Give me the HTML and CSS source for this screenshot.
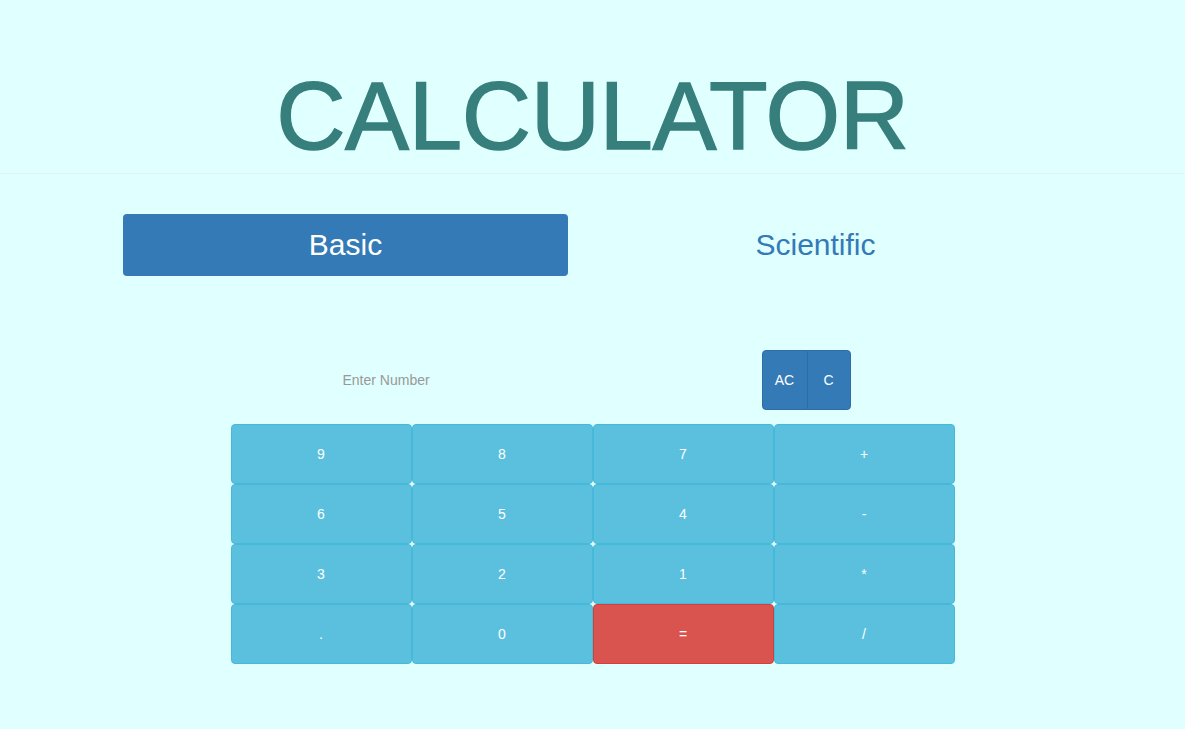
FILE: index.html
```html
<!DOCTYPE html>
<html>
<head>
<meta charset="utf-8">
<title>Calculator</title>
<link rel="stylesheet" href="styles.css">
</head>
<body>
<header class="page-header">
  <h1 class="title">CALCULATOR</h1>
</header>
<nav class="tabs">
  <a class="tab tab-active">Basic</a>
  <a class="tab tab-plain">Scientific</a>
</nav>
<main class="calc">
  <div class="entry-row">
    <input class="entry" type="text" placeholder="Enter Number">
    <div class="clear-group">
      <button class="clear-btn clear-all">AC</button>
      <button class="clear-btn clear-one">C</button>
    </div>
  </div>
  <div class="keys">
    <button class="key">9</button>
    <button class="key">8</button>
    <button class="key">7</button>
    <button class="key">+</button>
    <button class="key">6</button>
    <button class="key">5</button>
    <button class="key">4</button>
    <button class="key">-</button>
    <button class="key">3</button>
    <button class="key">2</button>
    <button class="key">1</button>
    <button class="key">*</button>
    <button class="key">.</button>
    <button class="key">0</button>
    <button class="key key-equals">=</button>
    <button class="key">/</button>
  </div>
</main>
</body>
</html>
```
FILE: styles.css
```css
html, body {
  margin: 0;
  padding: 0;
  background: #e0ffff;
  font-family: "Liberation Sans", Arial, Helvetica, sans-serif;
  font-size: 14px;
}

.page-header {
  padding: 68px 0 9px;
  border-bottom: 1px solid #e6f0f0;
}

.title {
  margin: 0;
  text-align: center;
  font-size: 96px;
  line-height: 96px;
  font-weight: normal;
  letter-spacing: -0.4px;
  color: #367f7c;
  -webkit-text-stroke: 1.4px #367f7c;
}

.tabs {
  display: flex;
  margin: 40px 122px 0 123px;
}

.tab {
  display: flex;
  align-items: center;
  justify-content: center;
  height: 62px;
  font-size: 30px;
  border-radius: 4px;
  cursor: pointer;
}

.tab-active {
  width: 445px;
  background: #337ab7;
  color: #fff;
}

.tab-plain {
  flex: 1;
  color: #337ab7;
}

.calc {
  width: 724px;
  margin: 74px auto 0;
}

.entry-row {
  display: flex;
  align-items: center;
  height: 60px;
  margin-bottom: 14px;
}

.entry {
  box-sizing: border-box;
  width: 431px;
  margin-left: 100px;
  padding: 0 12px;
  height: 34px;
  border: none;
  background: transparent;
  font-family: inherit;
  font-size: 14px;
  color: #555;
  outline: none;
}

.entry::placeholder {
  color: #999;
}

.clear-group {
  display: flex;
  height: 60px;
}

.clear-btn {
  height: 60px;
  padding: 0;
  background: #337ab7;
  border: 1px solid #2e6da4;
  color: #fff;
  font-family: inherit;
  font-size: 14px;
  text-align: center;
}

.clear-all {
  width: 46px;
  border-radius: 4px 0 0 4px;
}

.clear-one {
  width: 44px;
  margin-left: -1px;
  border-radius: 0 4px 4px 0;
}

.keys {
  display: grid;
  grid-template-columns: repeat(4, 181px);
  grid-auto-rows: 60px;
}

.key {
  background: #5bc0de;
  border: 1px solid #46b8da;
  border-radius: 4px;
  color: #fff;
  font-family: inherit;
  font-size: 14px;
  padding: 0;
}

.key-equals {
  background: #d9534f;
  border-color: #d43f3a;
}
```
